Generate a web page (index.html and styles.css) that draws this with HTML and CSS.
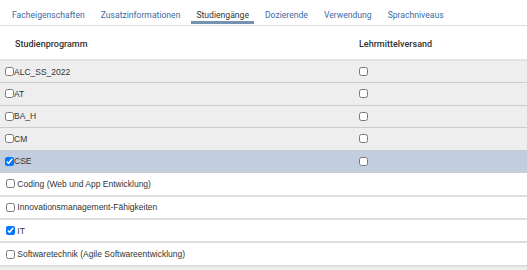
FILE: index.html
```html
<!DOCTYPE html>
<html lang="de">
<head>
    <meta charset="UTF-8">
    <title>Studiengänge</title>
    <link rel="stylesheet" href="styles.css">
</head>
<body>
    <nav class="tabs">
        <a class="tab">Facheigenschaften</a>
        <a class="tab">Zusatzinformationen</a>
        <a class="tab active">Studiengänge</a>
        <a class="tab">Dozierende</a>
        <a class="tab">Verwendung</a>
        <a class="tab">Sprachniveaus</a>
    </nav>

    <table class="programs">
        <thead>
            <tr>
                <th class="col-name">Studienprogramm</th>
                <th class="col-ship">Lehrmittelversand</th>
            </tr>
        </thead>
        <tbody>
            <tr class="assigned">
                <td><label><input type="checkbox">ALC_SS_2022</label></td>
                <td><input type="checkbox"></td>
            </tr>
            <tr class="assigned">
                <td><label><input type="checkbox">AT</label></td>
                <td><input type="checkbox"></td>
            </tr>
            <tr class="assigned">
                <td><label><input type="checkbox">BA_H</label></td>
                <td><input type="checkbox"></td>
            </tr>
            <tr class="assigned">
                <td><label><input type="checkbox">CM</label></td>
                <td><input type="checkbox"></td>
            </tr>
            <tr class="assigned selected">
                <td><label><input type="checkbox" checked>CSE</label></td>
                <td><input type="checkbox"></td>
            </tr>
            <tr class="open">
                <td colspan="2"><label><input type="checkbox"> Coding (Web und App Entwicklung)</label></td>
            </tr>
            <tr class="open">
                <td colspan="2"><label><input type="checkbox"> Innovationsmanagement-Fähigkeiten</label></td>
            </tr>
            <tr class="open">
                <td colspan="2"><label><input type="checkbox" checked> IT</label></td>
            </tr>
            <tr class="open">
                <td colspan="2"><label><input type="checkbox"> Softwaretechnik (Agile Softwareentwicklung)</label></td>
            </tr>
            <tr class="assigned">
                <td colspan="2">&nbsp;</td>
            </tr>
        </tbody>
    </table>
</body>
</html>
```

FILE: styles.css
```css
* {
    margin: 0;
    padding: 0;
    box-sizing: border-box;
}

body {
    font-family: "Liberation Sans", Arial, sans-serif;
    font-size: 8.5px;
    color: #333;
    background: white;
    overflow: hidden;
}

.tabs {
    display: flex;
    height: 26px;
    padding-left: 4px;
    border-bottom: 1px solid #dddddd;
}

.tab {
    font-family: Roboto, "Liberation Sans", sans-serif;
    font-size: 8.6px;
    color: #3d6aa3;
    padding: 10px 5px 0;
    margin: 0 3px;
    height: 25px;
    border-bottom: 3px solid transparent;
    cursor: pointer;
}

.tab.active {
    color: #333;
    border-bottom-color: #7593b0;
    height: 24px;
}

.programs {
    width: 100%;
    border-collapse: collapse;
}

.programs th {
    font-family: Roboto, "Liberation Sans", sans-serif;
    font-size: 9px;
    font-weight: 500;
    text-align: left;
    height: 34px;
    padding-top: 2px;
    border-bottom: 2px solid #e2e2e2;
}

.col-name {
    width: 355px;
    padding-left: 15px;
}

.col-ship {
    padding-left: 4px;
}

.programs td {
    height: 22.5px;
    vertical-align: middle;
}

.programs td:first-child {
    padding-left: 5px;
}

.programs td + td {
    padding-left: 4px;
}

.programs label {
    display: flex;
    align-items: center;
    white-space: pre;
}

input[type="checkbox"] {
    width: 9px;
    height: 9px;
    margin: 0;
    display: block;
}

.assigned {
    background: #eeeeee;
    border-bottom: 1px solid #cccccc;
}

.assigned.selected {
    background: #c2cede;
}

.open {
    background: white;
    border-bottom: 2px solid #dedede;
}

.open td {
    height: 23.3px;
}

.open td:first-child {
    padding-left: 6px;
}
```
